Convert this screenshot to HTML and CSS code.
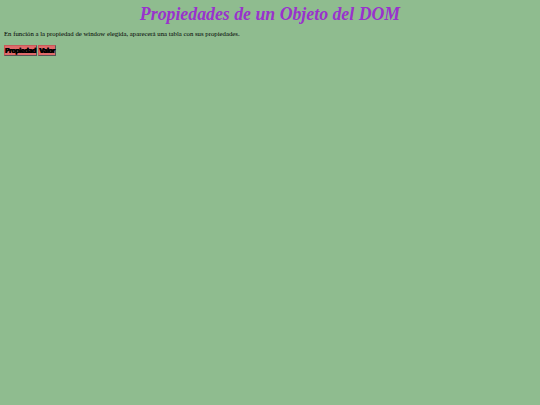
FILE: index.html
```html
<!DOCTYPE html>
<html>
<head>
<meta charset="utf-8">
<link rel="stylesheet" href="styles.css">
</head>
<body>
<h1 class="title">Propiedades de un Objeto del DOM</h1>
<p class="intro">En función a la propiedad de window elegida, aparecerá una tabla con sus propiedades.</p>
<table class="props">
<tr><th>Propiedad</th><th>Valor</th></tr>
</table>
</body>
</html>
```
FILE: styles.css
```css
html, body {
  background: #8fbc8f;
}
body {
  margin: 4px;
  font-family: "Liberation Serif", serif;
  color: #000;
}
.title {
  margin: 0;
  text-align: center;
  font-size: 17.8px;
  font-style: italic;
  font-weight: bold;
  color: #9932cc;
  line-height: 20px;
}
.intro {
  margin: 5px 0 0 0;
  font-size: 6.75px;
  line-height: 9px;
}
.props {
  margin-top: 6px;
  margin-left: -1px;
  border-collapse: separate;
  border-spacing: 1px;
}
.props th {
  background: #e06b6b;
  border-top: 1px solid #c85a5a;
  border-left: 1px solid #c85a5a;
  border-right: 1px solid #555;
  border-bottom: 1px solid #555;
  font-family: "Liberation Sans Narrow", "DejaVu Sans Condensed", sans-serif;
  font-weight: bold;
  font-size: 7px;
  letter-spacing: -0.6px;
  padding: 1px 0.5px 0 0;
  line-height: 8px;
  text-shadow: 0.35px 0 0 #000, -0.35px 0 0 #000;
}
```
